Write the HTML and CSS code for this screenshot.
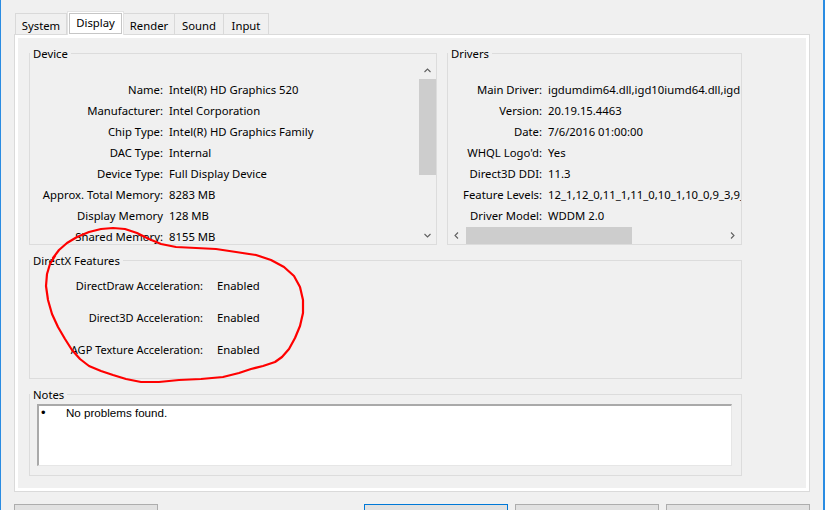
FILE: index.html
```html
<!DOCTYPE html>
<html>
<head>
<meta charset="utf-8">
<title>DirectX Diagnostic Tool - Display</title>
<link rel="stylesheet" href="styles.css">
</head>
<body>
<div class="window">
  <div class="tabs">
    <div class="tab t-system">System</div>
    <div class="tab active t-display">Display</div>
    <div class="tab t-render">Render</div>
    <div class="tab t-sound">Sound</div>
    <div class="tab t-input">Input</div>
  </div>
  <div class="page">
    <div class="page-inner">
      <div class="top-row">
        <fieldset class="group device">
          <legend>Device</legend>
          <div class="pane">
            <div class="list">
              <div class="row"><span class="lbl">Name:</span><span class="val">Intel(R) HD Graphics 520</span></div>
              <div class="row"><span class="lbl">Manufacturer:</span><span class="val">Intel Corporation</span></div>
              <div class="row"><span class="lbl">Chip Type:</span><span class="val">Intel(R) HD Graphics Family</span></div>
              <div class="row"><span class="lbl">DAC Type:</span><span class="val">Internal</span></div>
              <div class="row"><span class="lbl">Device Type:</span><span class="val">Full Display Device</span></div>
              <div class="row"><span class="lbl">Approx. Total Memory:</span><span class="val">8283 MB</span></div>
              <div class="row"><span class="lbl">Display Memory</span><span class="val">128 MB</span></div>
              <div class="row"><span class="lbl">Shared Memory:</span><span class="val">8155 MB</span></div>
            </div>
            <div class="vscroll">
              <div class="arrow"><svg width="7" height="5" viewBox="0 0 7 5"><polyline points="0.5,4 3.5,1 6.5,4" fill="none" stroke="#606060" stroke-width="1.1"/></svg></div>
              <div class="vthumb"></div>
              <div class="track"></div>
              <div class="arrow"><svg width="7" height="5" viewBox="0 0 7 5"><polyline points="0.5,1 3.5,4 6.5,1" fill="none" stroke="#606060" stroke-width="1.1"/></svg></div>
            </div>
          </div>
        </fieldset>
        <fieldset class="group drivers">
          <legend>Drivers</legend>
          <div class="pane col">
            <div class="list">
              <div class="row"><span class="lbl">Main Driver:</span><span class="val">igdumdim64.dll,igd10iumd64.dll,igd10iumd64.dll,igd12umd64.dll</span></div>
              <div class="row"><span class="lbl">Version:</span><span class="val">20.19.15.4463</span></div>
              <div class="row"><span class="lbl">Date:</span><span class="val">7/6/2016 01:00:00</span></div>
              <div class="row"><span class="lbl">WHQL Logo'd:</span><span class="val">Yes</span></div>
              <div class="row"><span class="lbl">Direct3D DDI:</span><span class="val">11.3</span></div>
              <div class="row"><span class="lbl">Feature Levels:</span><span class="val">12_1,12_0,11_1,11_0,10_1,10_0,9_3,9_2,9_1</span></div>
              <div class="row"><span class="lbl">Driver Model:</span><span class="val">WDDM 2.0</span></div>
            </div>
            <div class="hscroll">
              <div class="harrow"><svg width="5" height="7" viewBox="0 0 5 7"><polyline points="4,0.5 1,3.5 4,6.5" fill="none" stroke="#606060" stroke-width="1.1"/></svg></div>
              <div class="hthumb"></div>
              <div class="track"></div>
              <div class="harrow"><svg width="5" height="7" viewBox="0 0 5 7"><polyline points="1,0.5 4,3.5 1,6.5" fill="none" stroke="#606060" stroke-width="1.1"/></svg></div>
            </div>
          </div>
        </fieldset>
      </div>
      <fieldset class="group dx">
        <legend>DirectX Features</legend>
        <div class="dx-rows">
          <div class="dx-row"><span class="dx-lbl">DirectDraw Acceleration:</span><span class="dx-val">Enabled</span></div>
          <div class="dx-row"><span class="dx-lbl">Direct3D Acceleration:</span><span class="dx-val">Enabled</span></div>
          <div class="dx-row"><span class="dx-lbl">AGP Texture Acceleration:</span><span class="dx-val">Enabled</span></div>
        </div>
      </fieldset>
      <fieldset class="group notes">
        <legend>Notes</legend>
        <div class="notes-box">
          <div class="note"><span class="bullet">&bull;</span><span>No problems found.</span></div>
        </div>
      </fieldset>
    </div>
  </div>
  <div class="buttons">
    <div class="btn" aria-label="Help"></div>
    <div class="btn-group">
      <div class="btn default" aria-label="Next Page"></div>
      <div class="btn" aria-label="Save All Information"></div>
      <div class="btn" aria-label="Exit"></div>
    </div>
  </div>
  <svg class="annotation" width="825" height="510" viewBox="0 0 825 510">
    <polyline fill="none" stroke="#ff0000" stroke-width="2.2" stroke-linejoin="round" stroke-linecap="round"
      points="52,258 58,250 66,243 76,237 88,232 100,229 112,228 124,229 136,233 148,239 160,244 175,247 195,248 215,249 235,252 255,255 270,260 283,267 293,276 299,287 302,300 302,313 299,326 294,338 288,349 281,357 274,362 262,366 250,369 238,373 222,377 200,379 178,380 158,382 140,382 125,379 112,375 100,371 88,366 79,359 71,350 64,339 57,327 51,314 47,300 45,286 46,274 49,264 54,256"/>
  </svg>
</div>
</body>
</html>
```
FILE: styles.css
```css
* { box-sizing: border-box; }
html, body { margin: 0; padding: 0; }
body {
  width: 825px;
  height: 510px;
  overflow: hidden;
  background: #f0f0f0;
  font-family: "Noto Sans", "Liberation Sans", sans-serif;
  font-size: 11.3px;
  color: #000;
}
.window {
  position: relative;
  width: 825px;
  height: 510px;
  border-left: 1px solid #2a8ce2;
  border-right: 2px solid #2a8ce2;
  padding: 11px 0 0 13px;
  overflow: hidden;
}
.tabs {
  display: flex;
  align-items: flex-end;
  height: 23px;
  padding-left: 1px;
}
.tab {
  height: 21px;
  line-height: 21px;
  padding-top: 1px;
  text-align: center;
  border: 1px solid #d9d9d9;
  border-bottom: none;
  margin-left: -1px;
  background: #f0f0f0;
  white-space: nowrap;
}
.t-system { width: 52px; margin-left: 0; }
.t-display { width: 57px; margin-left: 0; }
.t-render { width: 52px; }
.t-sound { width: 50px; }
.t-input { width: 46px; }
.tab.active {
  position: relative;
  z-index: 1;
  height: 24px;
  margin-bottom: -1px;
  padding-top: 0;
  line-height: 22px;
  background: #fff;
  border-color: #e3e3e3;
  box-shadow: inset 0 0 0 1px #fff, inset 0 0 0 2px #c6c6c6;
}
.page {
  width: 796px;
  height: 458px;
  border: 1px solid #dadada;
  background: #fff;
  padding: 3px;
}
.page-inner {
  height: 100%;
  background: #f0f0f0;
  padding: 9px 0 0 11px;
  display: flex;
  flex-direction: column;
  gap: 9px;
}
.group {
  margin: 0;
  padding: 0;
  border: 1px solid #dcdcdc;
  min-width: 0;
}
.group legend {
  padding: 0 3px;
  margin: 0;
  height: 13px;
  line-height: 13px;
}
.top-row {
  display: flex;
  gap: 10px;
}
.device { width: 408px; }
.drivers { width: 295px; }
.pane {
  height: 184px;
  padding-top: 2px;
  display: flex;
  overflow: hidden;
}
.pane.col { flex-direction: column; }
.list {
  flex: 1;
  min-width: 0;
  min-height: 0;
  overflow: hidden;
  padding-top: 17px;
}
.row {
  display: flex;
  height: 21px;
  line-height: 21px;
  white-space: nowrap;
}
.device .lbl { width: 133px; }
.drivers .lbl { width: 94px; }
.lbl { flex: none; text-align: right; }
.val { margin-left: 6px; }
.vscroll {
  width: 17px;
  flex: none;
  display: flex;
  flex-direction: column;
}
.arrow {
  height: 17px;
  display: flex;
  align-items: center;
  justify-content: center;
}
.vthumb { height: 96px; background: #cdcdcd; }
.track { flex: 1; }
.hscroll {
  height: 17px;
  flex: none;
  display: flex;
}
.harrow {
  width: 17px;
  display: flex;
  align-items: center;
  justify-content: center;
}
.hthumb { width: 166px; margin-left: 1px; background: #cdcdcd; }
.dx { width: 713px; }
.dx-rows { padding: 3px 0 12px; }
.dx-row {
  display: flex;
  height: 32px;
  line-height: 32px;
  white-space: nowrap;
  font-size: 11px;
}
.dx-lbl { width: 173px; text-align: right; flex: none; }
.dx-val { margin-left: 14px; font-size: 11.3px; }
.notes { width: 713px; }
.notes-box {
  margin: 3px 9px 9px 7px;
  height: 62px;
  background: #fff;
  border-top: 2px solid #a9a9a9;
  border-left: 2px solid #a9a9a9;
  border-right: 1px solid #e6e6e6;
  border-bottom: 1px solid #e6e6e6;
  padding: 0 2px;
  font-family: "Liberation Sans", Arial, sans-serif;
  font-size: 11.6px;
}
.note { display: flex; line-height: 14px; }
.bullet { width: 25px; flex: none; font-size: 13px; }
.buttons {
  width: 796px;
  margin-top: 12px;
  display: flex;
  justify-content: space-between;
}
.btn-group { display: flex; gap: 7px; }
.btn {
  width: 144px;
  height: 23px;
  background: #e1e1e1;
  border: 1px solid #adadad;
}
.btn.default { border-color: #0078d7; }
.annotation {
  position: absolute;
  left: 0;
  top: 0;
  pointer-events: none;
}
```
